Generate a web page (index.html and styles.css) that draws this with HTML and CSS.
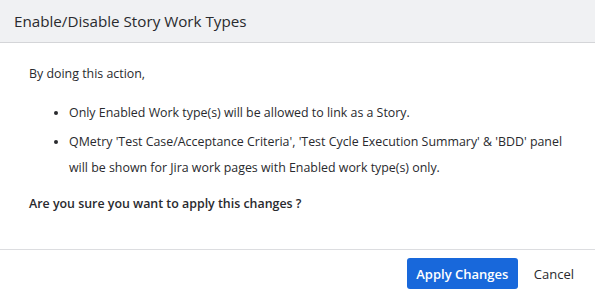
FILE: index.html
```html
<!DOCTYPE html>
<html>
<head>
<meta charset="utf-8">
<link rel="stylesheet" href="styles.css">
</head>
<body>
<div class="dialog">
  <div class="header">Enable/Disable Story Work Types</div>
  <div class="body">
    <p class="intro">By doing this action,</p>
    <ul class="list">
      <li>Only Enabled Work type(s) will be allowed to link as a Story.</li>
      <li>QMetry 'Test Case/Acceptance Criteria', 'Test Cycle Execution Summary' &amp; 'BDD' panel will be shown for Jira work pages with Enabled work type(s) only.</li>
    </ul>
    <p class="confirm">Are you sure you want to apply this changes ?</p>
  </div>
  <div class="footer">
    <button class="btn primary">Apply Changes</button>
    <button class="btn link">Cancel</button>
  </div>
</div>
</body>
</html>
```
FILE: styles.css
```css
html, body { margin: 0; padding: 0; background: #fff; }
body { font-family: "Open Sans", "Noto Sans", sans-serif; color: #292a2e; }
.dialog { width: 595px; height: 296px; display: flex; flex-direction: column; }
.header {
  height: 43px; box-sizing: border-box; background: #f0f1f3;
  border-bottom: 1px solid #d4d5d8;
  padding: 0 14px; display: flex; align-items: center;
  font-size: 15.2px; color: #292a2e;
}
.body { box-sizing: border-box; height: 207px; padding: 20px 26px 0 29px; font-size: 12.4px; border-bottom: 1px solid #dcdde0; }
.intro { margin: 0; line-height: 22px; }
.list { margin: 15px 0 0; padding-left: 40px; }
.list li { line-height: 26px; margin-bottom: 3px; }
.confirm { margin: 12px 0 0; font-weight: 600; line-height: 22px; }
.footer { box-sizing: border-box; height: 46px; display: flex; align-items: flex-start; justify-content: flex-end; padding: 8px 13px 0 0; gap: 8px; }
.btn { font-family: inherit; font-size: 13px; border: 0; border-radius: 3px; height: 31px; padding: 0 8px; cursor: pointer; white-space: nowrap; }
.primary { background: #1868db; color: #fff; font-weight: 600; width: 111px; padding: 0; }
.link { background: transparent; color: #292a2e; }
```
